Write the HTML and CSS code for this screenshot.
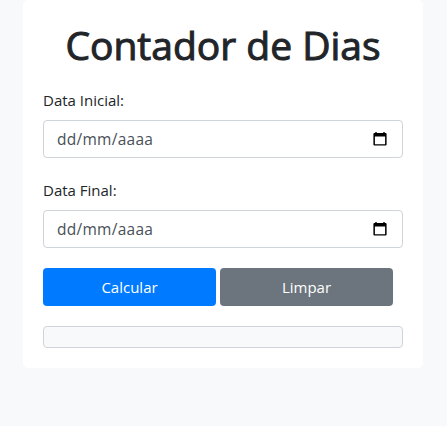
FILE: index.html
```html
<!DOCTYPE html>
<html lang="pt-br">
<head>
<meta charset="utf-8">
<title>Contador de Dias</title>
<link rel="stylesheet" href="styles.css">
</head>
<body>
<main class="card">
  <h1 class="title">Contador de Dias</h1>
  <div class="group">
    <div class="label">Data Inicial:</div>
    <div class="control"><span class="placeholder">dd/mm/aaaa</span>
      <svg class="calendar" viewBox="0 0 14 14"><path fill="#000" fill-rule="evenodd" d="M2.300 0h1.400v1h6.600V0h1.400v1h.9q1 0 1 1v10.600q0 1-1 1H1.400q-1 0-1-1V2q0-1 1-1h.9zM1.900 4.500v7.700h10.200V4.500z"/></svg>
    </div>
  </div>
  <div class="group">
    <div class="label">Data Final:</div>
    <div class="control"><span class="placeholder">dd/mm/aaaa</span>
      <svg class="calendar" viewBox="0 0 14 14"><path fill="#000" fill-rule="evenodd" d="M2.300 0h1.400v1h6.600V0h1.400v1h.9q1 0 1 1v10.600q0 1-1 1H1.400q-1 0-1-1V2q0-1 1-1h.9zM1.900 4.500v7.700h10.200V4.500z"/></svg>
    </div>
  </div>
  <div class="actions">
    <button class="btn primary">Calcular</button>
    <button class="btn secondary">Limpar</button>
  </div>
  <div class="result"></div>
</main>
</body>
</html>
```

FILE: styles.css
```css
* { box-sizing: border-box; }
body { margin: 0; background: #f8f9fa; color: #212529; font: 16px/24px "Open Sans", "Noto Sans", sans-serif; }
.card { width: 400px; height: 368px; margin-left: 23px; padding: 22px 20px 20px; background: #fff; border-radius: 5px; }
.title { margin: 0 0 18px; font-size: 39px; line-height: 45px; height: 48px; font-weight: 400; -webkit-text-stroke: 1px #212529; text-align: center; white-space: nowrap; }
.group { margin-bottom: 20px; }
.label { height: 24px; margin-bottom: 8px; font-size: 15px; }
.control { display: flex; align-items: center; justify-content: space-between; height: 38px; padding: 0 15px 0 13px; border: 1px solid #ced4da; border-radius: 4px; color: #495057; }
.placeholder { font-size: 15.5px; letter-spacing: .27px; }
.calendar { width: 14px; height: 14px; }
.actions { display: flex; gap: 4px; margin-bottom: 20px; }
.btn { width: 173px; height: 38px; padding: 0; border: 0; border-radius: 4px; color: #fff; font: 15px/24px "Open Sans", "Noto Sans", sans-serif; }
.primary { background: #007bff; }
.secondary { background: #6c757d; }
.result { height: 22px; border: 1px solid #ced4da; border-radius: 4px; background: #f8f9fa; }
```
